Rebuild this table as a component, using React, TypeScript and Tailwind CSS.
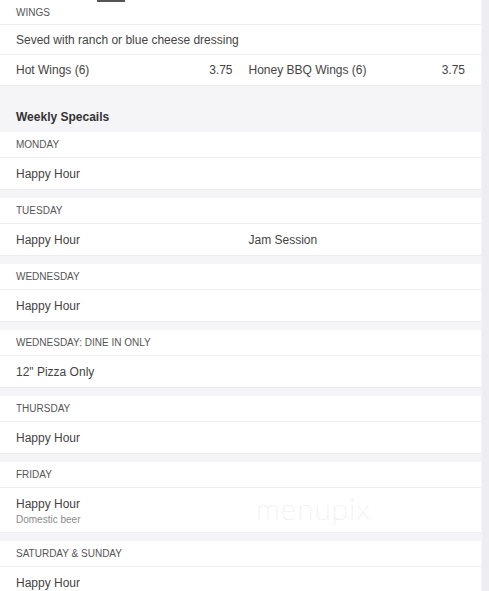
import type { ReactNode } from "react"

type Item = { name: string; note?: string; price?: string }

const specials: { day: string; items: Item[] }[] = [
  { day: "MONDAY", items: [{ name: "Happy Hour" }] },
  { day: "TUESDAY", items: [{ name: "Happy Hour" }, { name: "Jam Session" }] },
  { day: "WEDNESDAY", items: [{ name: "Happy Hour" }] },
  { day: "WEDNESDAY: DINE IN ONLY", items: [{ name: '12" Pizza Only' }] },
  { day: "THURSDAY", items: [{ name: "Happy Hour" }] },
  { day: "FRIDAY", items: [{ name: "Happy Hour", note: "Domestic beer" }] },
  { day: "SATURDAY & SUNDAY", items: [{ name: "Happy Hour" }] },
]

function Card({ title, children, first }: { title: string; children: ReactNode; first?: boolean }) {
  return (
    <section className="border-b border-[#ececf0] bg-white">
      <div
        className={`flex items-center border-b border-[#efeff2] px-4 text-[10px] uppercase text-[#555] ${
          first ? "h-[25px]" : "h-[26px]"
        }`}
      >
        {title}
      </div>
      {children}
    </section>
  )
}

function ItemRow({ items, tight }: { items: Item[]; tight?: boolean }) {
  return (
    <div className="grid grid-cols-2 gap-4 px-4">
      {items.map((it) => (
        <div
          key={it.name}
          className={`flex justify-between ${
            tight ? "min-h-[30px] pt-[8px] pb-[7px]" : it.note ? "pt-[9px] pb-[5px]" : "min-h-[31px] pt-[9px] pb-[7px]"
          }`}
        >
          <div>
            <div className="text-[12px] leading-[15px] text-[#444]">{it.name}</div>
            {it.note && <div className="mt-[1px] text-[10px] leading-[14px] text-[#8a8a8a]">{it.note}</div>}
          </div>
          {it.price && <div className="text-[12px] leading-[15px] text-[#444]">{it.price}</div>}
        </div>
      ))}
    </div>
  )
}

export default function App() {
  return (
    <div className="flex h-[591px] w-[489px] overflow-hidden bg-[#f5f5f8] font-['Liberation_Sans',Arial,sans-serif]">
      <div className="relative w-[481px]">
        {/* tab underline */}
        <div className="absolute left-[97px] top-0 z-10 h-[2px] w-[28px] bg-[#555]" />

        <Card title="Wings" first>
          <div className="flex h-[30px] items-center border-b border-[#efeff2] px-4 text-[12px] text-[#444]">
            Seved with ranch or blue cheese dressing
          </div>
          <ItemRow
            tight
            items={[
              { name: "Hot Wings (6)", price: "3.75" },
              { name: "Honey BBQ Wings (6)", price: "3.75" },
            ]}
          />
        </Card>

        <h2 className="px-4 pt-[22px] pb-[6px] text-[12px] leading-[18px] font-bold text-[#333]">Weekly Specails</h2>

        <div className="flex flex-col gap-[8px]">
          {specials.map((s) => (
            <Card key={s.day} title={s.day}>
              <ItemRow items={s.items} />
            </Card>
          ))}
        </div>

        {/* watermark */}
        <div className="pointer-events-none absolute left-[256px] top-[486px] text-[30px] font-thin tracking-[1px] text-[#dcdcdc] font-['Lato',sans-serif]">
          menupix
        </div>
      </div>
      <div className="ml-px flex-1 bg-[#ededf2]" />
    </div>
  )
}
